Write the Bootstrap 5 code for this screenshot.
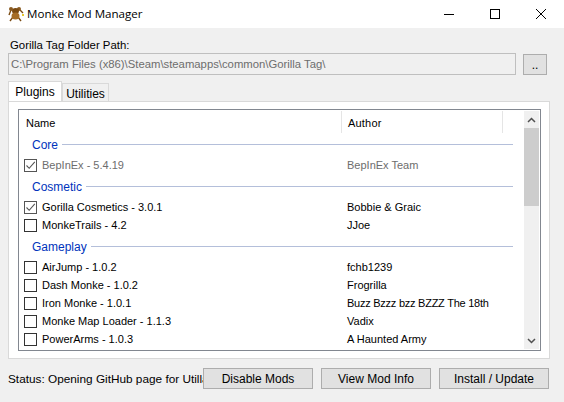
<!DOCTYPE html>
<html lang="en">
<head>
    <meta charset="UTF-8">
    <meta name="viewport" content="width=device-width, initial-scale=1.0">
    <title>Monke Mod Manager</title>
    <link href="https://cdn.jsdelivr.net/npm/bootstrap@5.3.0/dist/css/bootstrap.min.css" rel="stylesheet">
    <style>
        html, body { height: 100%; }
        body { background: #f0f0f0; color: #000; font-family: "Liberation Sans", Arial, sans-serif; font-size: 12px; overflow: hidden; }
        .win-title { height: 28px; background: #fff; font-family: "Open Sans", sans-serif; font-size: 11.6px; }
        .win-title svg { display: block; }
        .win-name { margin-left: 3px; }
        .win-ctrl { width: 46px; }
        .win-main { padding: 10px 14px 0 8px; }
        .path-label { height: 15px; line-height: 14px; padding-left: 2px; font-size: 11.4px; }
        .path-row { height: 22px; }
        .path-input.form-control { height: 22px; width: 508px; padding: 0 2px; font-size: 11.3px; line-height: 20px; color: #6d6d6d; background: #f0f0f0; border: 1px solid #bfbfbf; border-radius: 0; box-shadow: none; }
        .win-btn.btn { background: #e1e1e1; border: 1px solid #adadad; border-radius: 0; padding: 0; color: #000; font-size: 12px; }
        .dots-btn.btn { width: 24px; height: 21px; margin-left: 7px; margin-top: 1px; line-height: 20px; }
        .tab-strip.nav-tabs { margin-top: 6px; height: 20px; border: 0; align-items: flex-end; }
        .tab-strip .nav-link { font-size: 12px; padding: 0; color: #000; border: 1px solid #d9d9d9; border-bottom: 0; border-radius: 0; background: #f0f0f0; margin: 0; text-align: center; }
        .tab-strip .nav-link.active { width: 54px; height: 20px; line-height: 20px; background: #fff; border-color: #d9d9d9; color: #000; position: relative; z-index: 1; }
        .tab-strip .nav-link.other { width: 47px; height: 18px; line-height: 20px; }
        .tab-panel { width: 542px; height: 258px; background: #fff; border: 1px solid #d9d9d9; padding: 7px 8px 8px 9px; }
        .mod-box { height: 242px; border: 1px solid #828790; padding: 1px; }
        .mod-list { overflow: hidden; font-size: 11px; }
        .mod-head { height: 21px; }
        .col-name { width: 321px; padding-left: 6px; }
        .col-author { width: 161px; padding-left: 6px; border-left: 1px solid #e5e5e5; height: 22px; line-height: 24px; letter-spacing: .2px; }
        .col-rest { border-left: 1px solid #e5e5e5; height: 22px; }
        .mod-head .col-name { line-height: 24px; }
        .group-row { height: 24px; padding-left: 12px; padding-right: 11px; color: #0033bc; font-size: 12px; }
        .group-row span { padding-top: 1px; }
        .group-line { height: 1px; background: #b4bfda; margin-left: 4px; }
        .mod-row { height: 18px; }
        .mod-row .col-name { display: flex; align-items: center; padding-left: 4px; }
        .mod-row .col-author { border-left: 0; height: 18px; line-height: 18px; padding-left: 6px; letter-spacing: 0; white-space: nowrap; }
        .mod-row .author-tight { letter-spacing: -.25px; }
        .mod-off { color: #6d6d6d; }
        .mod-check.form-check-input { width: 13px; height: 13px; margin: 0 5px 0 0; border: 1px solid #333; border-radius: 0; background-color: #fff; flex: none; box-shadow: none; opacity: 1; }
        .mod-check.form-check-input:checked { background-color: #fff; border-color: #555; background-size: 11px 11px; background-image: url("data:image/svg+xml,%3Csvg xmlns='http://www.w3.org/2000/svg' viewBox='0 0 11 11'%3E%3Cpath d='M1.5 5.5l2.7 2.8L9.8 1.8' fill='none' stroke='%23555' stroke-width='1.1'/%3E%3C/svg%3E"); }
        .scroll-bar { width: 15px; background: #f0f0f0; flex: none; }
        .scroll-arrow { height: 17px; }
        .scroll-thumb { height: 78px; background: #cdcdcd; }
        .status-row { margin-top: 9px; height: 21px; }
        .status-text { width: 195px; flex: none; overflow: hidden; white-space: nowrap; line-height: 22px; font-size: 11.8px; }
        .foot-btn.btn { width: 110px; height: 21px; line-height: 20px; }
    </style>
</head>
<body>
    <div class="win-title d-flex align-items-center">
        <svg class="ms-2" width="16" height="16" viewBox="0 0 16 16">
            <!-- monke icon -->
            <path d="M3 4L1 9M12 4l3 3M5 11l-3 4M10 11l3 4" stroke="#7a4a12" stroke-width="1.4" fill="none"/>
            <circle cx="3" cy="3" r="2" fill="#8a5a20"/>
            <circle cx="11" cy="3" r="2" fill="#8a5a20"/>
            <ellipse cx="7.500" cy="5" rx="3.500" ry="3" fill="#7a4a12"/>
            <ellipse cx="7.500" cy="10" rx="4" ry="3.500" fill="#a56c25"/>
            <rect x="14" y="8" width="2" height="2" fill="#e8c830"/>
        </svg>
        <span class="win-name">Monke Mod Manager</span>
        <div class="ms-auto d-flex">
            <div class="win-ctrl d-flex justify-content-center">
                <svg width="10" height="10" viewBox="0 0 10 10"><path d="M0 5.500h10" stroke="#000"/></svg>
            </div>
            <div class="win-ctrl d-flex justify-content-center">
                <svg width="10" height="10" viewBox="0 0 10 10"><rect x=".5" y=".5" width="9" height="9" fill="none" stroke="#000"/></svg>
            </div>
            <div class="win-ctrl d-flex justify-content-center">
                <svg width="10" height="10" viewBox="0 0 10 10"><path d="M0 0l10 10M10 0L0 10" stroke="#000"/></svg>
            </div>
        </div>
    </div>

    <div class="win-main">
        <div class="path-label">Gorilla Tag Folder Path:</div>
        <div class="path-row d-flex">
            <input class="form-control path-input" type="text" value="C:\Program Files (x86)\Steam\steamapps\common\Gorilla Tag\" disabled>
            <button type="button" class="btn win-btn dots-btn">..</button>
        </div>

        <ul class="nav nav-tabs tab-strip">
            <li class="nav-item"><a class="nav-link active" href="#">Plugins</a></li>
            <li class="nav-item"><a class="nav-link other" href="#">Utilities</a></li>
        </ul>

        <div class="tab-panel">
            <div class="mod-box d-flex">
                <div class="mod-list flex-grow-1">
                    <div class="mod-head d-flex">
                        <div class="col-name">Name</div>
                        <div class="col-author">Author</div>
                        <div class="col-rest flex-grow-1"></div>
                    </div>
                    <div id="mod-rows"></div>
                </div>
                <div class="scroll-bar d-flex flex-column">
                    <div class="scroll-arrow d-flex align-items-center justify-content-center">
                        <svg width="9" height="6" viewBox="0 0 9 6"><path d="M1 5l3.500-3.500L8 5" fill="none" stroke="#505050" stroke-width="1.500"/></svg>
                    </div>
                    <div class="scroll-thumb"></div>
                    <div class="flex-grow-1"></div>
                    <div class="scroll-arrow d-flex align-items-center justify-content-center">
                        <svg width="9" height="6" viewBox="0 0 9 6"><path d="M1 1l3.500 3.500L8 1" fill="none" stroke="#505050" stroke-width="1.500"/></svg>
                    </div>
                </div>
            </div>
        </div>

        <div class="status-row d-flex">
            <div class="status-text">Status: Opening GitHub page for Utilla</div>
            <button type="button" class="btn win-btn foot-btn">Disable Mods</button>
            <button type="button" class="btn win-btn foot-btn ms-2">View Mod Info</button>
            <button type="button" class="btn win-btn foot-btn ms-2">Install / Update</button>
        </div>
    </div>

    <script>
        const rows = [
            { group: 'Core' },
            { name: 'BepInEx - 5.4.19', author: 'BepInEx Team', checked: true, off: true },
            { group: 'Cosmetic' },
            { name: 'Gorilla Cosmetics - 3.0.1', author: 'Bobbie & Graic', checked: true },
            { name: 'MonkeTrails - 4.2', author: 'JJoe' },
            { group: 'Gameplay' },
            { name: 'AirJump - 1.0.2', author: 'fchb1239' },
            { name: 'Dash Monke - 1.0.2', author: 'Frogrilla' },
            { name: 'Iron Monke - 1.0.1', author: 'Buzz Bzzz bzz BZZZ The 18th', tight: true },
            { name: 'Monke Map Loader - 1.1.3', author: 'Vadix' },
            { name: 'PowerArms - 1.0.3', author: 'A Haunted Army' }
        ];
        document.getElementById('mod-rows').innerHTML = rows.map(r => {
            if (r.group) {
                return `<div class="group-row d-flex align-items-center"><span>${r.group}</span><div class="group-line flex-grow-1"></div></div>`;
            }
            return `<div class="mod-row d-flex ${r.off ? 'mod-off' : ''}">
                <div class="col-name"><input class="form-check-input mod-check" type="checkbox" ${r.checked ? 'checked' : ''}><span>${r.name}</span></div>
                <div class="col-author ${r.tight ? 'author-tight' : ''}">${r.author.replace('&', '&amp;')}</div>
            </div>`;
        }).join('');
    </script>
    <script src="https://cdn.jsdelivr.net/npm/bootstrap@5.3.0/dist/js/bootstrap.bundle.min.js"></script>
</body>
</html>
